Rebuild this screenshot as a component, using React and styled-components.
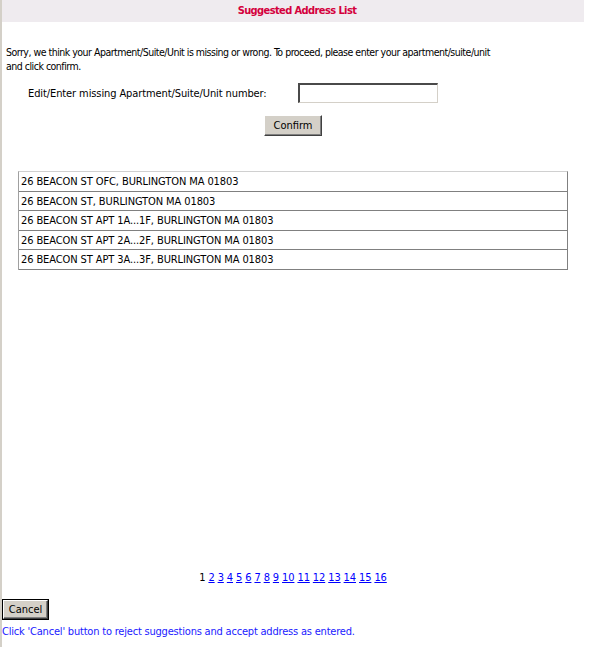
import React from "react"
import styled, { createGlobalStyle } from "styled-components"

const GlobalStyle = createGlobalStyle`
  html, body {
    margin: 0;
    padding: 0;
    background: #ffffff;
  }
  body {
    font-family: "DejaVu Sans Condensed", "Liberation Sans", sans-serif;
    font-size: 11px;
    letter-spacing: -0.1px;
    color: #000000;
  }
`

const Page = styled.div`
  min-height: 647px;
  border-left: 2px solid #d4d0c8;
  box-sizing: border-box;
`

const Main = styled.div`
  width: 582px;
`

const Header = styled.div`
  height: 22px;
  line-height: 22px;
  padding-left: 8px;
  background: #efebef;
  color: #d4003c;
  font-weight: bold;
  letter-spacing: -0.6px;
  text-align: center;
`

const Intro = styled.p`
  margin: 23px 0 0;
  padding-left: 4px;
  width: 500px;
  font-size: 10.5px;
  line-height: 14px;
  letter-spacing: -0.5px;
`

const FormRow = styled.div`
  display: flex;
  align-items: center;
  margin-top: 10px;
  padding-left: 26px;
`

const Label = styled.label`
  width: 270px;
`

const TextInput = styled.input`
  width: 140px;
  height: 20px;
  box-sizing: border-box;
  margin: 0;
  padding: 1px 3px;
  background: #ffffff;
  border-style: solid;
  border-width: 2px 1px 1px 2px;
  border-color: #4a4a4a #d4d0c8 #d4d0c8 #4a4a4a;
  font: inherit;
  outline: none;
`

const Centered = styled.div`
  display: flex;
  justify-content: center;
  margin-top: ${p => p.$gap || 0}px;
`

const Button = styled.button`
  display: block;
  height: ${p => p.$h || 21}px;
  min-width: ${p => p.$w || 58}px;
  margin: 0;
  padding: 0 4px;
  background: #d4d0c8;
  color: #000000;
  font: inherit;
  border: 1px solid;
  border-color: #ffffff #404040 #404040 #ffffff;
  box-shadow: inset -1px -1px 0 #808080;
  cursor: default;
`

const CancelButton = styled(Button)`
  outline: 1px solid #000000;
  outline-offset: 0;
  margin: 2px 0 0 1px;
`

const ResultArea = styled.div`
  height: 400px;
  margin-top: 35px;
  padding-left: 16px;
`

const AddressTable = styled.div`
  width: 550px;
  box-sizing: border-box;
  border-top: 1px solid #d0d0d0;
  border-left: 1px solid #a0a0a0;
  border-right: 1px solid #808080;
`

const AddressRow = styled.div`
  height: 17.6px;
  padding: 1px 0 0 2px;
  line-height: 18.6px;
  border-bottom: 1px solid #808080;
  white-space: nowrap;
`

const Pager = styled.div`
  display: flex;
  justify-content: center;
  gap: 3px;
  line-height: 14px;
`

const PageLink = styled.a`
  color: #0000ff;
  text-decoration: underline;
  cursor: pointer;
`

const Footer = styled.div`
  margin-top: 15px;
`

const Note = styled.div`
  margin-top: 6px;
  line-height: 14px;
  color: #1a1aff;
  letter-spacing: -0.2px;
  white-space: nowrap;
`

const addresses = [
  "26 BEACON ST OFC, BURLINGTON MA 01803",
  "26 BEACON ST, BURLINGTON MA 01803",
  "26 BEACON ST APT 1A...1F, BURLINGTON MA 01803",
  "26 BEACON ST APT 2A...2F, BURLINGTON MA 01803",
  "26 BEACON ST APT 3A...3F, BURLINGTON MA 01803",
]

const pages = Array.from({ length: 16 }, (_, i) => i + 1)

export default function App() {
  return (
    <Page>
      <GlobalStyle />
      <Main>
        <Header>Suggested Address List</Header>
        <Intro>
          Sorry, we think your Apartment/Suite/Unit is missing or wrong. To proceed, please enter your apartment/suite/unit and click confirm.
        </Intro>
        <FormRow>
          <Label htmlFor="unit">Edit/Enter missing Apartment/Suite/Unit number:</Label>
          <TextInput id="unit" type="text" />
        </FormRow>
        <Centered $gap={12}>
          <Button>Confirm</Button>
        </Centered>
        <ResultArea>
          <AddressTable>
            {addresses.map(a => (
              <AddressRow key={a}>{a}</AddressRow>
            ))}
          </AddressTable>
        </ResultArea>
        <Pager>
          {pages.map(n =>
            n === 1 ? <span key={n}>1</span> : <PageLink key={n}>{n}</PageLink>
          )}
        </Pager>
      </Main>
      <Footer>
        <CancelButton $w={45} $h={19}>Cancel</CancelButton>
        <Note>Click 'Cancel' button to reject suggestions and accept address as entered.</Note>
      </Footer>
    </Page>
  )
}
